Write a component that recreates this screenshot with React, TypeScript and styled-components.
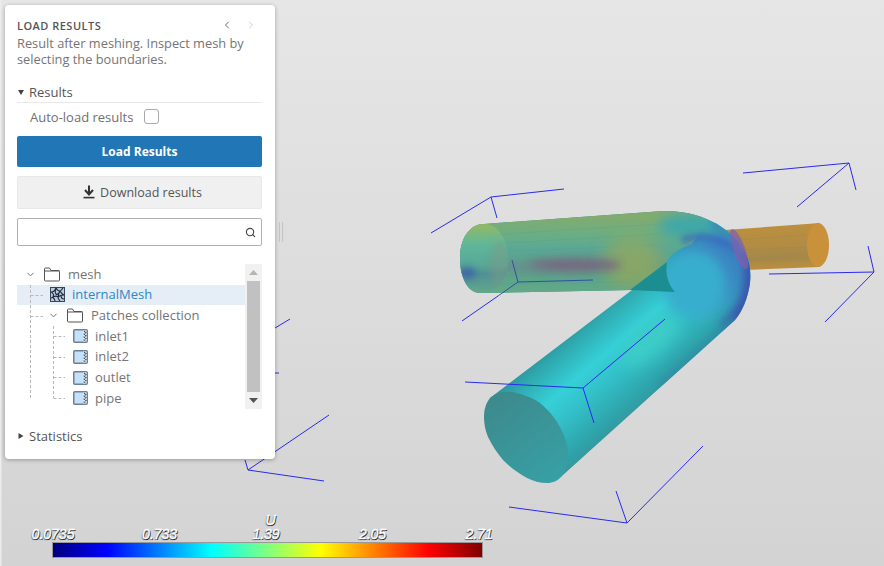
import React from "react";
import styled, { createGlobalStyle } from "styled-components";
import { ChevronDown, ChevronLeft, ChevronRight, Search } from "lucide-react";

const Global = createGlobalStyle`
  html, body { margin: 0; padding: 0; }
  body { font-family: "Open Sans", "Noto Sans", sans-serif; }
  * { box-sizing: border-box; }
`;

const Page = styled.div`
  position: relative;
  width: 884px;
  height: 566px;
  overflow: hidden;
  display: flex;
  align-items: flex-start;
  padding: 5px;
  background: linear-gradient(180deg, #e6e6e6 0%, #d3d3d3 100%);
`;

const Scene = styled.svg`
  position: absolute;
  left: 0;
  top: 0;
`;

const Panel = styled.section`
  position: relative;
  width: 270px;
  height: 454px;
  flex: none;
  display: flex;
  flex-direction: column;
  padding: 12px 13px 0 12px;
  background: #fff;
  border-radius: 4px;
  box-shadow: 0 1px 4px rgba(0, 0, 0, 0.3);
  color: #666;
  font-size: 13px;
`;

const Splitter = styled.div`
  position: relative;
  flex: none;
  width: 4px;
  height: 20px;
  margin: 217px 0 0 4px;
  border-left: 1px solid #c4c4c4;
  border-right: 1px solid #c4c4c4;
`;

const Header = styled.header`
  display: flex;
  align-items: center;
  justify-content: space-between;
  height: 16px;
`;

const Title = styled.h2`
  margin: 0;
  font-size: 11px;
  font-weight: 600;
  letter-spacing: 0.48px;
  color: #555;
`;

const Pager = styled.div`
  display: flex;
  gap: 12px;
  padding-right: 4px;
`;

const PagerButton = styled.span<{ $off?: boolean }>`
  display: flex;
  transform: translateX(-1px);
  color: ${(p) => (p.$off ? "#ccd1d8" : "#5f6b80")};
`;

const Description = styled.p`
  margin: 2px 0 0;
  font-size: 12.8px;
  line-height: 16px;
  color: #757575;
`;

const SectionHead = styled.div<{ $line?: boolean; $top: number }>`
  display: flex;
  align-items: center;
  gap: 5px;
  height: 21px;
  margin-top: ${(p) => p.$top}px;
  padding-left: 1px;
  color: #555;
  font-weight: 500;
  border-bottom: ${(p) => (p.$line ? "1px solid #e8e8e8" : "none")};
`;

const AutoRow = styled.label`
  display: flex;
  align-items: center;
  gap: 11px;
  height: 29px;
  padding: 0 0 2px 13px;
  color: #707070;
`;

const Check = styled.span`
  width: 15px;
  height: 15px;
  border: 1px solid #aaa;
  border-radius: 3px;
  background: #fff;
`;

const PrimaryButton = styled.button`
  display: block;
  width: 100%;
  height: 31px;
  margin-top: 4px;
  padding-bottom: 2px;
  border: none;
  border-radius: 2px;
  background: #2176b5;
  color: #fff;
  font: 700 12px "Open Sans", sans-serif;
`;

const SecondaryButton = styled.button`
  display: flex;
  align-items: center;
  justify-content: center;
  gap: 5px;
  width: 100%;
  height: 33px;
  margin-top: 9px;
  padding: 0 0 1px 6px;
  border: 1px solid #e8e8e8;
  border-radius: 2px;
  background: #f0f0f0;
  color: #555;
  font: 500 12.5px "Open Sans", sans-serif;
`;

const SearchBox = styled.div`
  display: flex;
  align-items: center;
  justify-content: flex-end;
  height: 28px;
  margin-top: 9px;
  padding-right: 5px;
  border: 1px solid #b0b0b0;
  border-radius: 2px;
  color: #444;
`;

const TreeArea = styled.div`
  display: flex;
  height: 145px;
  margin-top: 18px;
`;

const TreeList = styled.div`
  position: relative;
  flex: 1;
`;

const Guides = styled.svg`
  position: absolute;
  left: 0;
  top: 0;
  pointer-events: none;
`;

const Row = styled.div<{ $indent: number; $active?: boolean }>`
  display: flex;
  align-items: center;
  height: 20.67px;
  padding-left: ${(p) => p.$indent}px;
  background: ${(p) => (p.$active ? "#e5eef6" : "transparent")};
  color: ${(p) => (p.$active ? "#2f86c5" : "#757575")};
  white-space: nowrap;
`;

const Twist = styled.span`
  display: flex;
  width: 19px;
  color: #666;
`;

const Label = styled.span`
  margin-left: 7px;
  padding-bottom: 1px;
`;

const Scrollbar = styled.div`
  flex: none;
  width: 17px;
  display: flex;
  flex-direction: column;
  align-items: center;
  background: #f1f1f1;
`;

const ScrollEnd = styled.div`
  flex: none;
  height: 17px;
  display: flex;
  align-items: center;
  justify-content: center;
`;

const ScrollThumb = styled.div`
  flex: 1;
  width: 13px;
  background: #c1c1c1;
`;

const ColorLegend = styled.div`
  position: absolute;
  left: 52px;
  top: 514px;
  width: 431px;
  display: flex;
  flex-direction: column;
  align-items: stretch;
`;

const Ticks = styled.div`
  display: flex;
  justify-content: space-between;
  padding: 0 4px 0 1px;
  margin-bottom: 1px;
  height: 14px;
`;

const Tick = styled.span`
  width: 0;
  display: flex;
  justify-content: center;
  white-space: nowrap;
  font: italic 400 14px/14px "Liberation Sans", sans-serif;
  color: #fff;
  -webkit-text-stroke: 0.4px #fff;
  text-shadow: 1px 1px 0 #2a2a2a, -0.5px 0.5px 1px #444;
`;

const FieldName = styled(Tick)`
  margin: 0 auto;
  height: 13px;
  line-height: 13px;
  transform: translateX(3px);
`;

const Bar = styled.div`
  height: 16px;
  border: 1px solid #999;
  background: linear-gradient(
    90deg,
    #00007f 0%,
    #0000ff 12.5%,
    #00ffff 37%,
    #80ff80 50%,
    #ffff00 62.5%,
    #ff0000 87.5%,
    #7f0000 100%
  );
`;

const FolderIcon = () => (
  <svg width="17" height="15" viewBox="0 0 17 15" fill="none" stroke="#555" strokeWidth="1">
    <path d="M.5 13V2a1 1 0 0 1 1-1h4l1.5 2.5h7.5a1 1 0 0 1 1 1V13a1 1 0 0 1-1 1h-13a1 1 0 0 1-1-1Z" />
    <path d="M.5 4h15" />
  </svg>
);

const MeshIcon = () => (
  <svg width="15" height="15" viewBox="0 0 15 15" fill="none">
    <rect x=".5" y=".5" width="14" height="14" fill="#b8cadb" stroke="#39465a" />
    <path
      d="M1 5C3 5 5 4 6 1M6 1C7 3 9 4 10 4 11 4 12 2 13 1M1 5C3 6 4 8 3 10 2 11 1 11 1 11M3 10C5 9 7 9 8 10 9 8 8 6 10 4M8 10C9 9 11 8 14 8M10 4C11 6 12 7 14 8M6 1C5 4 5 6 6 7 7 8 9 7 10 4M3 10C4 12 5 13 5 14M8 10C8 12 9 13 10 14M11 8C11 10 12 12 14 12"
      stroke="#1f2b3d"
      strokeWidth="1.1"
    />
  </svg>
);

const PatchIcon = () => (
  <svg width="15" height="14" viewBox="0 0 15 14" fill="none">
    <rect x=".75" y=".75" width="13.5" height="12.5" rx="1" fill="#c4e0fb" stroke="#6f7f94" strokeWidth="1.5" />
    <rect x="10" y="1.5" width="3.5" height="11" fill="#e8f1f8" />
    <path d="M11 2 13 3.5 11 5 13 6.5 11 8 13 9.5 11 11 13 12" stroke="#3f4a5a" strokeWidth="1.1" strokeDasharray="1.6 .8" />
  </svg>
);

const Tri = ({ dir }: { dir: "down" | "right" }) => (
  <svg width="6" height="8" viewBox="0 0 6 8" fill="#444">
    {dir === "down" ? <path d="M0 2h6L3 7Z" /> : <path d="M.5 1 5.5 4 .5 7Z" />}
  </svg>
);

const DownloadIcon = () => (
  <svg width="12" height="14" viewBox="0 0 12 14" fill="none" stroke="#333">
    <path d="M6 .5V9" strokeWidth="2" />
    <path d="M2 5 6 9.4 10 5" strokeWidth="2" />
    <path d="M.5 12.6h11" strokeWidth="1.6" />
  </svg>
);

const axisSets: [number, number, number, number][][] = [
  [[431, 233, 491, 197], [491, 197, 564, 189], [491, 197, 497, 218]],
  [[743, 173, 849, 163], [849, 163, 797, 207], [849, 163, 856, 190]],
  [[769, 274, 874, 272], [874, 272, 825, 322], [874, 272, 868, 246]],
  [[465, 382, 583, 388], [583, 388, 665, 319], [583, 388, 594, 423]],
  [[509, 507, 627, 523], [627, 523, 703, 446], [627, 523, 616, 491]],
  [[275, 328, 290, 319], [275, 373, 279, 373], [248, 470, 329, 415], [248, 470, 324, 481], [248, 470, 245, 460], [462, 321, 498, 296]],
];

const Blur = ({ id, sd }: { id: string; sd: number }) => (
  <filter id={id} filterUnits="userSpaceOnUse" x="400" y="150" width="484" height="400">
    <feGaussianBlur stdDeviation={sd} />
  </filter>
);

const Viewport = () => (
  <Scene width="884" height="566" viewBox="0 0 884 566">
    <defs>
      <linearGradient id="lower" gradientUnits="userSpaceOnUse" x1="497" y1="388" x2="578" y2="482">
        <stop offset="0" stopColor="#2b9399" />
        <stop offset=".12" stopColor="#2fa9af" />
        <stop offset=".36" stopColor="#36d0d8" />
        <stop offset=".55" stopColor="#33bfc7" />
        <stop offset=".8" stopColor="#2ea2a9" />
        <stop offset="1" stopColor="#41898f" />
      </linearGradient>
      <linearGradient id="upper" gradientUnits="userSpaceOnUse" x1="560" y1="217" x2="560" y2="293">
        <stop offset="0" stopColor="#82ab70" />
        <stop offset=".22" stopColor="#6cae82" />
        <stop offset=".42" stopColor="#5aa895" />
        <stop offset=".62" stopColor="#5fa28e" />
        <stop offset=".85" stopColor="#5ca68a" />
        <stop offset="1" stopColor="#66a886" />
      </linearGradient>
      <linearGradient id="outlet" gradientUnits="userSpaceOnUse" x1="780" y1="225" x2="782" y2="270">
        <stop offset="0" stopColor="#bc8f3e" />
        <stop offset=".45" stopColor="#b18c44" />
        <stop offset=".72" stopColor="#a4884a" />
        <stop offset="1" stopColor="#bf8f3c" />
      </linearGradient>
      <linearGradient id="cap" gradientUnits="userSpaceOnUse" x1="484" y1="224" x2="484" y2="293">
        <stop offset="0" stopColor="#9bbb5c" />
        <stop offset=".28" stopColor="#62bb9a" />
        <stop offset=".6" stopColor="#56a89a" />
        <stop offset=".72" stopColor="#4d8c99" />
        <stop offset="1" stopColor="#62a88b" />
      </linearGradient>
      <linearGradient id="lowercap" gradientUnits="userSpaceOnUse" x1="495" y1="400" x2="555" y2="480">
        <stop offset="0" stopColor="#3d8a8d" />
        <stop offset="1" stopColor="#37a0a5" />
      </linearGradient>
      <Blur id="b2" sd={2} />
      <Blur id="b3" sd={3} />
      <Blur id="b4" sd={4} />
      <Blur id="b6" sd={6} />
      <Blur id="b8" sd={8} />
      <Blur id="b12" sd={12} />
      <clipPath id="ushape">
        <path d="M484 224 L663 211 C695 210 730 224 745 252 C750 262 751 272 750 283 C748 298 742 312 735 320 L563 475 L490 398 L632 290 L480 293 C468 293 460 278 460 258 C460 238 470 224 484 224 Z" />
      </clipPath>
      <clipPath id="upperclip">
        <path d="M484 224 L663 211 C680 211 695 214 708 220 L692 244 C680 248 670 254 667 262 L632 290 L480 293 C468 293 460 278 460 258 C460 238 470 224 484 224 Z" />
      </clipPath>
      <clipPath id="capclip">
        <path d="M484 224 C498 224 508 240 508 258 C508 278 498 293 482 293 C468 293 460 278 460 258 C460 238 470 224 484 224 Z" />
      </clipPath>
    </defs>

    <rect x="0" y="0" width="1.5" height="566" fill="#ececec" />

    {/* outlet pipe */}
    <path d="M725 230 L820 223 L820 267 L745 270 Z" fill="url(#outlet)" />
    <g stroke="#8f8648" strokeWidth="1" opacity=".25">
      <path d="M735 240 806 235M738 250 806 247M745 261 812 259" />
    </g>
    <ellipse cx="818" cy="245" rx="11" ry="22" fill="#c9913a" />

    {/* main body */}
    <g clipPath="url(#ushape)">
      <path d="M440 200 H800 V500 H440 Z" fill="url(#lower)" />
      <ellipse cx="650" cy="340" rx="36" ry="14" transform="rotate(-40 650 340)" fill="#3dcdc8" filter="url(#b8)" />
      <ellipse cx="716" cy="262" rx="40" ry="44" fill="#3a84c2" filter="url(#b12)" />
      <ellipse cx="694" cy="284" rx="32" ry="34" fill="#37aece" filter="url(#b6)" />
      <path d="M745 250 C752 264 752 284 745 303 C740 313 735 320 725 330" fill="none" stroke="#3a55ad" strokeWidth="14" filter="url(#b4)" />
      <path d="M735 320 L660 388" stroke="#2f8fa5" strokeWidth="10" filter="url(#b4)" />
    </g>

    <g clipPath="url(#upperclip)">
      <rect x="450" y="205" width="300" height="90" fill="url(#upper)" />
      <g stroke="#4d9a8c" strokeWidth="1" opacity=".18">
        <path d="M490 235 660 224M490 244 660 234M490 252 660 245M490 276 640 272M490 284 630 282" />
      </g>
      <ellipse cx="632" cy="262" rx="30" ry="26" fill="#a3a84f" opacity=".6" filter="url(#b8)" />
      <ellipse cx="575" cy="265" rx="46" ry="7" fill="#776680" opacity=".95" filter="url(#b4)" />
      <ellipse cx="525" cy="267" rx="28" ry="5" fill="#6e7f8c" opacity=".6" filter="url(#b4)" />
    </g>

    <g clipPath="url(#ushape)">
      <ellipse cx="692" cy="226" rx="34" ry="13" fill="#3fa8a8" filter="url(#b6)" />
      <path d="M712 222 C724 230 736 240 742 252" fill="none" stroke="#3b8fb5" strokeWidth="12" filter="url(#b3)" />
      <path d="M682 241 C697 234 722 236 738 252" fill="none" stroke="#3a58c0" strokeWidth="5" opacity=".85" filter="url(#b3)" />
    </g>

    <path d="M630 290 L667 262 C665 274 668 284 675 292 Z" fill="#1a8e90" />

    {/* left cap */}
    <path d="M484 224 C498 224 508 240 508 258 C508 278 498 293 482 293 C468 293 460 278 460 258 C460 238 470 224 484 224 Z" fill="url(#cap)" opacity=".8" />
    <g clipPath="url(#capclip)">
      <ellipse cx="467" cy="273" rx="9" ry="6" fill="#3a62a8" opacity=".8" filter="url(#b3)" />
      <ellipse cx="500" cy="265" rx="10" ry="24" fill="#7d9a85" opacity=".5" filter="url(#b3)" />
    </g>

    {/* purple sliver */}
    <ellipse cx="739" cy="249" rx="6" ry="21" transform="rotate(-20 739 249)" fill="#7b62b0" opacity=".75" />

    {/* lower cap */}
    <path d="M490 398 C497 392 505 391 513 392 C525 395 533 398 540 403 C551 412 558 422 563 433 C567 442 569 450 568 457 C567 466 565 471 563 475 C558 481 553 483 547 483 C540 483 533 481 527 478 C518 473 510 467 503 460 C497 453 492 445 488 437 C485 430 484 423 484 417 C484 409 486 403 490 398 Z" fill="url(#lowercap)" />

    <path d="M512 260 518 282 593 280M518 282 498 296" fill="none" stroke="#2d3fa0" strokeWidth="1" opacity=".85" />
    {axisSets.flat().map(([a, b, c, d], i) => (
      <line key={i} x1={a} y1={b} x2={c} y2={d} stroke="#2a2af0" strokeWidth="1" />
    ))}
  </Scene>
);

export default function App() {
  return (
    <Page>
      <Global />
      <Viewport />
      <Panel>
        <Header>
          <Title>LOAD RESULTS</Title>
          <Pager>
            <PagerButton><ChevronLeft size={12} /></PagerButton>
            <PagerButton $off><ChevronRight size={12} /></PagerButton>
          </Pager>
        </Header>
        <Description>Result after meshing. Inspect mesh by selecting the boundaries.</Description>
        <SectionHead $line $top={15}><Tri dir="down" />Results</SectionHead>
        <AutoRow>Auto-load results<Check /></AutoRow>
        <PrimaryButton>Load Results</PrimaryButton>
        <SecondaryButton><DownloadIcon />Download results</SecondaryButton>
        <SearchBox><Search size={11} strokeWidth={2.4} /></SearchBox>
        <TreeArea>
          <TreeList>
            <Row $indent={8}><Twist><ChevronDown size={11} /></Twist><FolderIcon /><Label>mesh</Label></Row>
            <Row $indent={33} $active><MeshIcon /><Label>internalMesh</Label></Row>
            <Row $indent={31}><Twist><ChevronDown size={11} /></Twist><FolderIcon /><Label>Patches collection</Label></Row>
            <Row $indent={56}><PatchIcon /><Label>inlet1</Label></Row>
            <Row $indent={56}><PatchIcon /><Label>inlet2</Label></Row>
            <Row $indent={56}><PatchIcon /><Label>outlet</Label></Row>
            <Row $indent={56}><PatchIcon /><Label>pipe</Label></Row>
            <Guides width="70" height="145" viewBox="0 0 70 145" fill="none" stroke="#b8b8b8" strokeDasharray="3 2">
              <path d="M13.5 21V135M13.5 31.5H26M13.5 52.5H26M36.5 62V134M36.5 72.5H48M36.5 93.5H48M36.5 113.5H48M36.5 134.5H48" />
            </Guides>
          </TreeList>
          <Scrollbar>
            <ScrollEnd>
              <svg width="9" height="6" viewBox="0 0 9 6" fill="#b5b5b5"><path d="M4.5 0 9 5H0Z" /></svg>
            </ScrollEnd>
            <ScrollThumb />
            <ScrollEnd>
              <svg width="9" height="6" viewBox="0 0 9 6" fill="#555"><path d="M0 0h9L4.5 5Z" /></svg>
            </ScrollEnd>
          </Scrollbar>
        </TreeArea>
        <SectionHead $top={16}><Tri dir="right" />Statistics</SectionHead>
      </Panel>
      <Splitter />
      <ColorLegend>
        <FieldName>U</FieldName>
        <Ticks>
          <Tick>0.0735</Tick>
          <Tick>0.733</Tick>
          <Tick>1.39</Tick>
          <Tick>2.05</Tick>
          <Tick>2.71</Tick>
        </Ticks>
        <Bar />
      </ColorLegend>
    </Page>
  );
}
